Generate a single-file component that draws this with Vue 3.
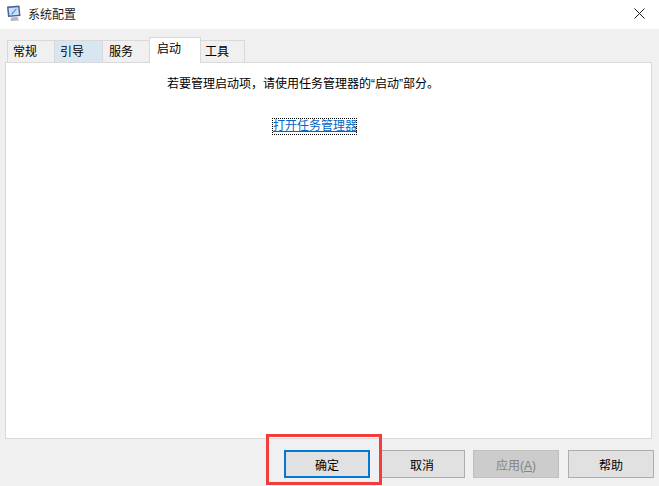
<script setup>
const tabs = [
  { label: '常规', cls: 't1' },
  { label: '引导', cls: 't2 hover' },
  { label: '服务', cls: 't3' },
  { label: '启动', cls: 't4 active' },
  { label: '工具', cls: 't5' },
]
</script>

<template>
  <div class="win">
    <header class="titlebar">
      <svg class="appicon" width="16" height="17" viewBox="0 0 16 17">
        <path d="M1 1.5 L13.5 0.5 L14.5 11 L2 12 Z" fill="#4d5f9e" />
        <path d="M2.6 3 L12.2 2.2 L13 9.8 L3.4 10.6 Z" fill="#c9e0f6" />
        <path d="M5 9 L10 3.5 L10.8 4.1 L6.2 9.4 Z" fill="#3a8ad4" />
        <path d="M5 12.5 L11.5 12 L13 15.5 L4.5 16 Z" fill="#b4b7be" />
      </svg>
      <span class="title">系统配置</span>
      <svg class="close" width="11" height="11" viewBox="0 0 11 11">
        <path d="M0.5 0.5 L10.5 10.5 M10.5 0.5 L0.5 10.5" stroke="#1a1a1a" stroke-width="1" fill="none" />
      </svg>
    </header>

    <main class="body">
      <nav class="tabs">
        <div v-for="t in tabs" :key="t.label" class="tab" :class="t.cls">{{ t.label }}</div>
      </nav>
      <section class="panel">
        <p class="msg">若要管理启动项，请使用任务管理器的“启动”部分。</p>
        <a class="link">打开任务管理器</a>
      </section>
      <footer class="actions">
        <button class="btn primary">确定</button>
        <button class="btn">取消</button>
        <button class="btn disabled">应用(<u>A</u>)</button>
        <button class="btn">帮助</button>
      </footer>
    </main>
    <div class="redbox"></div>
  </div>
</template>

<style scoped>
.win {
  position: relative;
  width: 659px;
  height: 486px;
  display: flex;
  flex-direction: column;
  overflow: hidden;
  font-family: "Liberation Sans", "Noto Sans CJK SC", sans-serif;
  font-size: 12px;
  color: #000;
  background: #f0f0f0;
}
.titlebar {
  height: 29px;
  flex: none;
  background: #fff;
  display: flex;
  align-items: center;
  padding-left: 6px;
  padding-right: 14px;
  padding-bottom: 2px;
  box-sizing: border-box;
}
.appicon { flex: none; }
.title {
  margin-left: 6px;
  flex: 1;
  color: #1a1a1a;
}
.close { flex: none; }
.body {
  flex: 1;
  display: flex;
  flex-direction: column;
  padding: 9px 5px 0;
  min-height: 0;
}
.tabs {
  height: 25px;
  display: flex;
  align-items: flex-end;
  padding-left: 2px;
  position: relative;
  z-index: 1;
  margin-bottom: -1px;
}
.tab {
  box-sizing: border-box;
  height: 22px;
  margin-bottom: 1px;
  background: #f0f0f0;
  border: 1px solid #d9d9d9;
  border-bottom: none;
  margin-right: -1px;
  line-height: 22px;
  font-size: 12px;
}
.t1 { width: 48px; padding-left: 5px; }
.t2 { width: 49px; padding-left: 5px; }
.t3 { width: 48px; padding-left: 6px; }
.t4 { width: 52px; padding-left: 7px; }
.t5 { width: 45px; padding-left: 4px; }
.hover { background: #d8e6f2; }
.active {
  background: #fff;
  height: 26px;
  margin-bottom: 0;
  line-height: 22px;
  position: relative;
  z-index: 2;
}
.panel {
  box-sizing: border-box;
  width: 647px;
  height: 377px;
  background: #fff;
  border: 1px solid #d9d9d9;
  padding-top: 12px;
  display: flex;
  flex-direction: column;
  align-items: flex-start;
}
.msg {
  margin: 0 0 0 161px;
  line-height: 18px;
  white-space: nowrap;
}
.link {
  margin: 26px 0 0 267px;
  width: 83px;
  line-height: 15px;
  height: 15px;
  color: #0066cc;
  text-decoration: underline;
  outline: 1px dotted #000;
  outline-offset: 0;
  white-space: nowrap;
}
.actions {
  display: flex;
  margin-top: 11px;
  padding-left: 279px;
  gap: 9px;
}
.btn {
  box-sizing: border-box;
  width: 86px;
  height: 28px;
  padding: 0;
  background: #e1e1e1;
  border: 1px solid #adadad;
  font-family: inherit;
  font-size: 12px;
  color: #000;
}
.btn:nth-child(3) { margin-left: -1px; }
.primary { border: 2px solid #0078d7; }
.disabled {
  background: #cccccc;
  border-color: #bfbfbf;
  color: #838383;
}
.redbox {
  position: absolute;
  left: 266px;
  top: 434px;
  width: 116px;
  height: 51px;
  box-sizing: border-box;
  border: 3px solid #f53c3c;
}
</style>

<style>
html, body { margin: 0; padding: 0; background: #f0f0f0; }
</style>
